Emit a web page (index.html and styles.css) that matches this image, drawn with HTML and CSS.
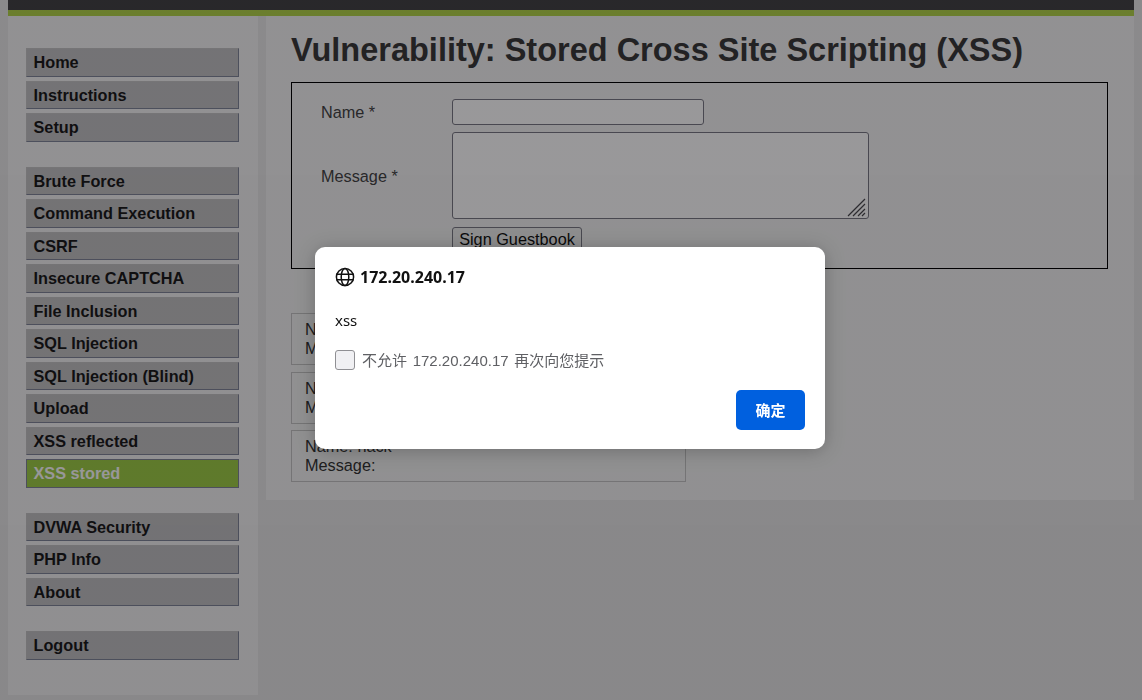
FILE: index.html
```html
<!DOCTYPE html>
<html>

<head>
    <meta charset="UTF-8">
    <meta name="viewport" content="width=device-width, initial-scale=1.0">
    <title>Vulnerability: Stored Cross Site Scripting (XSS)</title>
    <link rel="stylesheet" href="styles.css">
</head>

<body>
    <div class="top-bar"></div>

    <div class="layout">
        <div class="main-menu">
            <ul class="menu-group">
                <li><a href="#">Home</a></li>
                <li><a href="#">Instructions</a></li>
                <li><a href="#">Setup</a></li>
            </ul>
            <ul class="menu-group">
                <li><a href="#">Brute Force</a></li>
                <li><a href="#">Command Execution</a></li>
                <li><a href="#">CSRF</a></li>
                <li><a href="#">Insecure CAPTCHA</a></li>
                <li><a href="#">File Inclusion</a></li>
                <li><a href="#">SQL Injection</a></li>
                <li><a href="#">SQL Injection (Blind)</a></li>
                <li><a href="#">Upload</a></li>
                <li><a href="#">XSS reflected</a></li>
                <li class="selected"><a href="#">XSS stored</a></li>
            </ul>
            <ul class="menu-group">
                <li><a href="#">DVWA Security</a></li>
                <li><a href="#">PHP Info</a></li>
                <li><a href="#">About</a></li>
            </ul>
            <ul class="menu-group">
                <li><a href="#">Logout</a></li>
            </ul>
        </div>

        <div class="main-body">
            <h1>Vulnerability: Stored Cross Site Scripting (XSS)</h1>

            <form class="code-area">
                <label class="field-label">Name *</label>
                <input type="text" class="name-input">
                <label class="field-label">Message *</label>
                <div class="message-wrap">
                    <textarea class="message-input"></textarea>
                    <!-- Resize grip -->
                    <svg class="grip" width="20" height="20" viewBox="0 0 20 20" stroke="#4a4a4e" stroke-width="1.2">
                        <path d="M1 19L18 2M6 19L18 7M11 19L18 12M15 19L18 16" />
                    </svg>
                </div>
                <span></span>
                <div><button type="button" class="sign-button">Sign Guestbook</button></div>
            </form>

            <div class="guestbook">
                <div class="comment">Name: test<br>Message: This is a test comment.</div>
                <div class="comment">Name: hack<br>Message:</div>
                <div class="comment">Name: hack<br>Message:</div>
            </div>
        </div>
    </div>

    <!-- Dimmed backdrop and the browser alert -->
    <div class="backdrop"></div>
    <div class="alert-box">
        <div class="alert-origin">
            <svg class="globe" width="20" height="20" viewBox="0 0 20 20" fill="none" stroke="#111" stroke-width="1.5">
                <circle cx="10" cy="10" r="8.6" />
                <ellipse cx="10" cy="10" rx="3.8" ry="8.6" />
                <path d="M1.4 7.2H18.6M1.4 12.8H18.6" />
            </svg>
            <span>172.20.240.17</span>
        </div>
        <div class="alert-message">xss</div>
        <div class="alert-check">
            <span class="check-box"></span>
            <span>不允许 172.20.240.17 再次向您提示</span>
        </div>
        <div class="alert-actions">
            <button type="button" class="ok-button">确定</button>
        </div>
    </div>
</body>

</html>
```

FILE: styles.css
```css
* {
    margin: 0;
    padding: 0;
    box-sizing: border-box;
}

html,
body {
    height: 100%;
    overflow: hidden;
}

body {
    padding: 0 8px;
    background-color: #e7e7e7;
    color: #2f2f2f;
    font-family: "Liberation Sans", Arial, sans-serif;
    font-size: 16.25px;
}

.top-bar {
    height: 16px;
    background-color: #444446;
    border-bottom: 6px solid #b2d44a;
}

.layout {
    display: flex;
    align-items: flex-start;
    gap: 8px;
}

/* Left menu */
.main-menu {
    width: 250px;
    height: 679px;
    padding: 32px 19px 0 18px;
    background-color: #f4f4f4;
}

.menu-group {
    list-style: none;
    margin-bottom: 25px;
}

.menu-group li {
    height: 28.5px;
    margin-bottom: 4px;
}

.menu-group a {
    display: block;
    height: 100%;
    padding: 3px 0 0 6.5px;
    background-color: #c2c2c3;
    border: 1px solid #808699;
    border-top-color: #c4c4c4;
    border-left-color: #c4c4c4;
    color: #1a1a1a;
    font-weight: bold;
    line-height: 20px;
    text-decoration: none;
}

.menu-group .selected a {
    background-color: #9fce47;
    border-color: #808699;
    color: #fff;
}

/* Main content */
.main-body {
    flex: 1;
    height: 484px;
    padding: 16px 26px 18px 25px;
    background-color: #f4f4f4;
}

h1 {
    height: 50px;
    font-size: 32.5px;
    line-height: 36px;
    font-weight: bold;
    color: #3a3a3a;
}

.code-area {
    display: grid;
    grid-template-columns: 131px 1fr;
    grid-template-rows: 26px 87px auto;
    row-gap: 7px;
    align-items: center;
    align-content: start;
    height: 187px;
    padding: 16px 29px 0;
    border: 1px solid #000;
}

.field-label {
    padding-top: 1px;
    color: #444;
}

.name-input {
    width: 252px;
    height: 26px;
    background-color: #fff;
    border: 1px solid #7a7a85;
    border-radius: 3px;
}

.message-wrap {
    position: relative;
    width: 417px;
    height: 87px;
}

.message-input {
    display: block;
    width: 100%;
    height: 100%;
    background-color: #fff;
    border: 1px solid #7a7a85;
    border-radius: 3px;
    resize: none;
}

.grip {
    position: absolute;
    right: 2px;
    bottom: 2px;
}

.sign-button {
    display: block;
    width: 130px;
    height: 25px;
    margin-top: 1px;
    background-color: #efefef;
    border: 1px solid #7a7a85;
    border-radius: 3px;
    color: #111;
    font-family: "Liberation Sans", Arial, sans-serif;
    font-size: 16.25px;
}

.guestbook {
    width: 395px;
    margin-top: 44px;
}

.comment {
    height: 52px;
    margin-bottom: 6.5px;
    padding: 6px 13px;
    border: 1px solid #c4c4c4;
    line-height: 19px;
    color: #333;
}

/* Alert */
.backdrop {
    position: fixed;
    top: 0;
    left: 0;
    width: 100%;
    height: 100%;
    background: linear-gradient(rgba(2, 0, 4, 0.405), rgba(2, 0, 4, 0.41));
}

.alert-box {
    position: fixed;
    top: 247px;
    left: 315px;
    width: 510px;
    height: 202px;
    padding: 19px 20px 0;
    background-color: #fff;
    border-radius: 10px;
    box-shadow: 0 2px 20px rgba(0, 0, 0, 0.25);
    font-family: "Noto Sans", "Noto Sans CJK SC", sans-serif;
    color: #111;
}

.alert-origin {
    display: flex;
    align-items: center;
    gap: 5px;
    height: 21px;
    font-size: 16px;
    font-weight: bold;
}

.alert-message {
    margin-top: 23px;
    font-size: 15px;
    line-height: 20px;
}

.alert-check {
    display: flex;
    align-items: center;
    gap: 7px;
    margin-top: 19px;
    font-size: 15px;
    word-spacing: 1.5px;
    color: #5f6064;
    font-family: "Liberation Sans", "Noto Sans CJK SC", sans-serif;
}

.check-box {
    width: 20px;
    height: 20px;
    background-color: #f0f0f3;
    border: 1px solid #8f8f93;
    border-radius: 3px;
}

.alert-actions {
    display: flex;
    justify-content: flex-end;
    margin-top: 20px;
}

.ok-button {
    width: 69px;
    height: 40px;
    padding-bottom: 2px;
    background-color: #0060df;
    border: none;
    border-radius: 5px;
    color: #fff;
    font-family: "Noto Sans CJK SC", sans-serif;
    font-size: 15px;
    font-weight: bold;
}
```
